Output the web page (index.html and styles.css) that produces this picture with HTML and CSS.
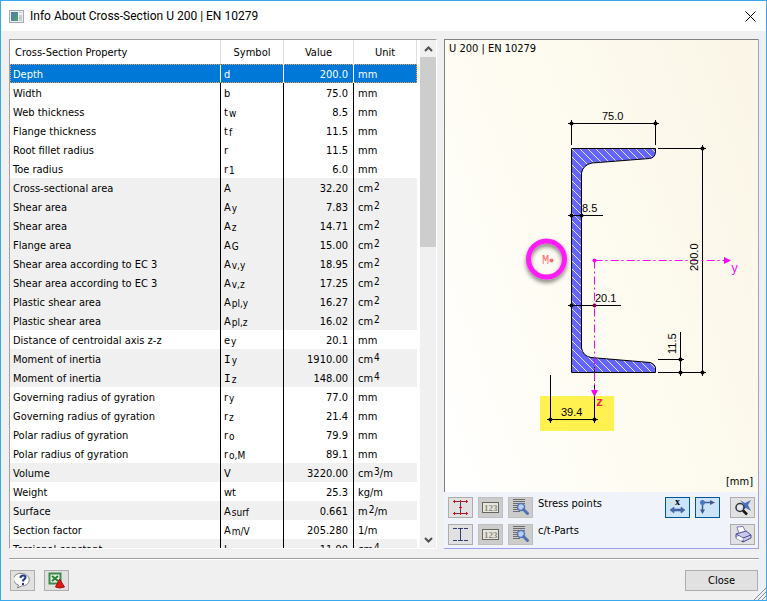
FILE: index.html
```html
<!DOCTYPE html>
<html lang="en">
<head>
<meta charset="utf-8">
<title>Info About Cross-Section U 200 | EN 10279</title>
<link rel="stylesheet" href="styles.css">
</head>
<body>
<div class="window">
  <header class="titlebar">
    <svg class="app-icon" width="15" height="13" viewBox="0 0 15 13" aria-hidden="true">
      <defs><linearGradient id="app" x1="0" y1="0" x2="1" y2="1"><stop offset="0" stop-color="#4a79a8"/><stop offset="1" stop-color="#53a06f"/></linearGradient></defs>
      <rect x=".5" y=".5" width="14" height="12" fill="#eef0f2" stroke="#a4a9ae"/>
      <rect x="2" y="2" width="7" height="9" fill="url(#app)"/>
      <path d="M10 2h3v1h-3zM10 5h3v6h-3z" fill="#c3cad0"/>
    </svg>
    <h1 class="title">Info About Cross-Section U 200 | EN 10279</h1>
    <button class="close-x" type="button" aria-label="Close window">
      <svg width="11" height="11" viewBox="0 0 11 11"><path d="M.5.5l10 10M10.500.5l-10 10" stroke="#000" fill="none"/></svg>
    </button>
  </header>

  <main class="content">
    <section class="list">
      <div class="table-view">
        <table class="props">
          <colgroup><col class="c-name"><col class="c-sym"><col class="c-val"><col class="c-unit"></colgroup>
          <thead><tr><th>Cross-Section Property</th><th>Symbol</th><th>Value</th><th>Unit</th></tr></thead>
          <tbody>
            <tr class="selected"><td>Depth</td><td>d</td><td>200.0</td><td>mm</td></tr>
            <tr><td>Width</td><td>b</td><td>75.0</td><td>mm</td></tr>
            <tr><td>Web thickness</td><td>t<sub>w</sub></td><td>8.5</td><td>mm</td></tr>
            <tr><td>Flange thickness</td><td>t<sub>f</sub></td><td>11.5</td><td>mm</td></tr>
            <tr><td>Root fillet radius</td><td>r</td><td>11.5</td><td>mm</td></tr>
            <tr><td>Toe radius</td><td>r<sub>1</sub></td><td>6.0</td><td>mm</td></tr>
            <tr class="shade"><td>Cross-sectional area</td><td>A</td><td>32.20</td><td>cm<sup>2</sup></td></tr>
            <tr class="shade"><td>Shear area</td><td>A<sub>y</sub></td><td>7.83</td><td>cm<sup>2</sup></td></tr>
            <tr class="shade"><td>Shear area</td><td>A<sub>z</sub></td><td>14.71</td><td>cm<sup>2</sup></td></tr>
            <tr class="shade"><td>Flange area</td><td>A<sub>G</sub></td><td>15.00</td><td>cm<sup>2</sup></td></tr>
            <tr class="shade"><td>Shear area according to EC 3</td><td>A<sub>v,y</sub></td><td>18.95</td><td>cm<sup>2</sup></td></tr>
            <tr class="shade"><td>Shear area according to EC 3</td><td>A<sub>v,z</sub></td><td>17.25</td><td>cm<sup>2</sup></td></tr>
            <tr class="shade"><td>Plastic shear area</td><td>A<sub>pl,y</sub></td><td>16.27</td><td>cm<sup>2</sup></td></tr>
            <tr class="shade"><td>Plastic shear area</td><td>A<sub>pl,z</sub></td><td>16.02</td><td>cm<sup>2</sup></td></tr>
            <tr><td>Distance of centroidal axis z-z</td><td>e<sub>y</sub></td><td>20.1</td><td>mm</td></tr>
            <tr class="shade"><td>Moment of inertia</td><td><span class="serif-i">I</span><sub>y</sub></td><td>1910.00</td><td>cm<sup>4</sup></td></tr>
            <tr class="shade"><td>Moment of inertia</td><td><span class="serif-i">I</span><sub>z</sub></td><td>148.00</td><td>cm<sup>4</sup></td></tr>
            <tr><td>Governing radius of gyration</td><td>r<sub>y</sub></td><td>77.0</td><td>mm</td></tr>
            <tr><td>Governing radius of gyration</td><td>r<sub>z</sub></td><td>21.4</td><td>mm</td></tr>
            <tr><td>Polar radius of gyration</td><td>r<sub>o</sub></td><td>79.9</td><td>mm</td></tr>
            <tr><td>Polar radius of gyration</td><td>r<sub>o,M</sub></td><td>89.1</td><td>mm</td></tr>
            <tr class="shade"><td>Volume</td><td>V</td><td>3220.00</td><td>cm<sup>3</sup>/m</td></tr>
            <tr><td>Weight</td><td>wt</td><td>25.3</td><td>kg/m</td></tr>
            <tr class="shade"><td>Surface</td><td>A<sub>surf</sub></td><td>0.661</td><td>m<sup>2</sup>/m</td></tr>
            <tr><td>Section factor</td><td>A<sub>m/V</sub></td><td>205.280</td><td>1/m</td></tr>
            <tr class="shade"><td>Torsional constant</td><td>J</td><td>11.90</td><td>cm<sup>4</sup></td></tr>
          </tbody>
        </table>
      </div>
      <div class="scrollbar">
        <button type="button" class="arrow" aria-label="Scroll up"><svg width="9" height="6" viewBox="0 0 9 6"><path d="M1 5l3.500-3.500L8 5" fill="none" stroke="#505050" stroke-width="2"/></svg></button>
        <div class="track"><div class="thumb"></div></div>
        <button type="button" class="arrow" aria-label="Scroll down"><svg width="9" height="6" viewBox="0 0 9 6"><path d="M1 1l3.500 3.500L8 1" fill="none" stroke="#505050" stroke-width="2"/></svg></button>
      </div>
    </section>

    <section class="preview">
      <div class="canvas">
        <svg class="drawing" viewBox="445 40 313 452" role="img" aria-label="Channel section U 200">
          <defs>
            <pattern id="hatch" width="8" height="8" x="3" y="4" patternUnits="userSpaceOnUse"><rect width="8" height="8" fill="#6464ff"/><path d="M-1-1l10 10M-1 7l2 2M7-1l2 2" stroke="#e4e4ff" stroke-width="1"/></pattern>
            <filter id="shadow" x="-30%" y="-30%" width="170%" height="170%"><feDropShadow dx="0" dy="3" stdDeviation="2" flood-color="#000" flood-opacity=".5"/></filter>
          </defs>
          <rect x="540" y="396" width="74" height="35" fill="#fff150"/>
          <path d="M571.500 148.500H655.500V152Q655 158 649.500 158.500L592 163Q583 165 581.500 173V348Q583 356 591 357.500L650 362.500Q655 364 655.500 368V372.500H571.500Z" fill="url(#hatch)" stroke="#000"/>
          <g stroke="#000" fill="none">
            <path d="M568 123.500H659M571.500 120V145M655.500 120V145"/>
            <path d="M658 148.500H706M658 372.500H706M702.500 145V376"/>
            <path d="M568 215.500H603M568 305.500H621"/>
            <path d="M680.500 332V376M658 359.500H684"/>
            <path d="M550.500 375V423M594.500 396V423M547 419.500H598"/>
            <path d="M594.500 358V390" stroke-dasharray="5 4"/>
          </g>
          <g stroke="#f0f" fill="none" stroke-dasharray="8 3 2 3">
            <path d="M594.500 260.500H725M594.500 260.500V391"/>
          </g>
          <path d="M724 257l7 3.500-7 3.500zM591 390h7l-3.500 7z" fill="#f0f"/>
          <circle cx="594.500" cy="260.500" r="2" fill="#f0f"/>
          <g fill="#000">
            <circle cx="571.500" cy="123.500" r="2"/><circle cx="655.500" cy="123.500" r="2"/>
            <circle cx="702.500" cy="148.500" r="2"/><circle cx="702.500" cy="372.500" r="2"/>
            <circle cx="571.500" cy="215.500" r="2"/><circle cx="581.500" cy="215.500" r="2"/>
            <circle cx="571.500" cy="305.500" r="2"/><circle cx="594.500" cy="305.500" r="2" fill="#804"/>
            <circle cx="680.500" cy="359.500" r="2"/><circle cx="680.500" cy="372.500" r="2"/>
            <circle cx="550.500" cy="419.500" r="2"/><circle cx="594.500" cy="419.500" r="2"/>
          </g>
          <g class="dim">
            <text x="602" y="120">75.0</text>
            <text x="582" y="212">8.5</text>
            <text x="595" y="302">20.1</text>
            <text x="561" y="416">39.4</text>
            <text transform="translate(698 271) rotate(-90)">200.0</text>
            <text transform="translate(676 354) rotate(-90)">11.5</text>
          </g>
          <circle cx="546.500" cy="259" r="18" fill="none" stroke="#ff1cf7" stroke-width="5" filter="url(#shadow)"/>
          <circle cx="551.500" cy="260.500" r="2" fill="#ff6b6b"/>
          <text class="axis mark" x="542" y="264">M</text>
          <text class="axis" x="731" y="272">y</text>
          <text class="axis zed" x="596" y="406">z</text>
        </svg>
        <div class="caption">U 200 | EN 10279</div>
        <div class="units">[mm]</div>
      </div>

      <div class="toolbar">
        <div class="tools">
          <button type="button" class="tool" aria-labelledby="stress"><svg width="17" height="17" viewBox="0 0 17 17"><path d="M1 2.500h15M1 14.500h15M8.500 3v11" stroke="#3a3f66" fill="none"/><path d="M1 2.500h3M2.500 1v3M1 14.500h3M2.500 13v3M7 2.500h3M8.500 1v3M13 2.500h3M14.500 1v3M7 8.500h3M8.500 7v3M7 14.500h3M8.500 13v3M13 14.500h3M14.500 13v3" stroke="#e00a14"/></svg></button>
          <button type="button" class="tool off" aria-label="Number stress points"><svg width="17" height="11" viewBox="0 0 17 11"><rect x=".5" y=".5" width="16" height="10" fill="#e6e6de" stroke="#66665e"/><text class="digits" x="2" y="9">123</text></svg></button>
          <button type="button" class="tool off" aria-label="Stress point details"><svg width="18" height="17" viewBox="0 0 18 17"><path d="M1 .5h12M1 2.500h12M1 4.500h12M1 6.500h5M1 8.500h4M1 10.500h5M1 12.500h7" stroke="#6c6c6c"/><circle cx="9" cy="8" r="3.500" fill="#b9d0f5" stroke="#5674b8" stroke-width="1.500"/><path d="M11.500 10.500l4 4" stroke="#5270b4" stroke-width="3" stroke-linecap="round"/></svg></button>
          <span class="tool-label" id="stress">Stress points</span>
          <button type="button" class="tool on push" aria-label="Show dimensions"><svg width="17" height="17" viewBox="0 0 17 17"><text class="ex" x="6" y="6">x</text><path d="M1 11l4-3v2h7V8l4 3-4 3v-2H5v2z" fill="#4569ae" stroke="#34528c" stroke-width=".5"/></svg></button>
          <button type="button" class="tool on" aria-label="Show axes"><svg width="17" height="17" viewBox="0 0 17 17"><path d="M3.500 3.500H13M3.500 3.500V13" stroke="#46598b" stroke-width="1.500"/><path d="M11 1l5 2.500L11 6zM1 10.500h5L3.500 15z" fill="#46598b"/><circle cx="3.500" cy="3.500" r="2.500" fill="#4776c4"/></svg></button>
          <button type="button" class="tool gap" aria-label="Zoom to fit"><svg width="18" height="17" viewBox="0 0 18 17"><path d="M6 1l5 3 6-3-3 5 3 6-5-3-5 2 3-5z" fill="#4670c0"/><circle cx="6" cy="8.500" r="4" fill="#e8edf4" fill-opacity=".7" stroke="#333" stroke-width="1.500"/><path d="M9 11.500l4 4" stroke="#111" stroke-width="2.500"/></svg></button>
        </div>
        <div class="tools">
          <button type="button" class="tool" aria-labelledby="parts"><svg width="17" height="17" viewBox="0 0 17 17"><path d="M1 2.500h4M12 2.500h4M1 14.500h4M12 14.500h4M8.500 3v11M6 2.500h5M6 14.500h5" stroke="#343d72" fill="none"/></svg></button>
          <button type="button" class="tool off" aria-label="Number c/t-parts"><svg width="17" height="11" viewBox="0 0 17 11"><rect x=".5" y=".5" width="16" height="10" fill="#e6e6de" stroke="#66665e"/><text class="digits" x="2" y="9">123</text></svg></button>
          <button type="button" class="tool off" aria-label="c/t-part details"><svg width="18" height="17" viewBox="0 0 18 17"><path d="M1 .5h12M1 2.500h12M1 4.500h12M1 6.500h5M1 8.500h4M1 10.500h5M1 12.500h7" stroke="#6c6c6c"/><circle cx="9" cy="8" r="3.500" fill="#b9d0f5" stroke="#5674b8" stroke-width="1.500"/><path d="M11.500 10.500l4 4" stroke="#5270b4" stroke-width="3" stroke-linecap="round"/></svg></button>
          <span class="tool-label" id="parts">c/t-Parts</span>
          <button type="button" class="tool push" aria-label="Print"><svg width="18" height="17" viewBox="0 0 18 17"><path d="M3 1l6-.5 3 5.500-7 2z" fill="#fff" stroke="#7a7ab5"/><path d="M2 8l10-3 5 4v3l-8 4-7-4z" fill="#c9c9f0" stroke="#4b4b8c"/><path d="M2 8l7 4 8-3M9 12v4" fill="none" stroke="#4b4b8c"/><path d="M5 10l5 3-3 2-5-3z" fill="#fff"/></svg></button>
        </div>
      </div>
    </section>
  </main>

  <footer class="footer">
    <button type="button" class="tool" aria-label="Help"><svg width="17" height="17" viewBox="0 0 17 17"><path d="M8.500 1.500a7 6 0 1 1-1 12.500l-4 2 1-3a7 6 0 0 1 4-11.500z" fill="#fafafa" stroke="#858585"/><path d="M6.500 6q0-2.500 2.500-2.500 2.500 0 2.500 2 0 1-1.500 2-1 .5-1 2" stroke="#25398e" stroke-width="2" fill="none"/><path d="M8 11h2v2H8z" fill="#25398e"/></svg></button>
    <button type="button" class="tool" aria-label="Export to Excel"><svg width="18" height="17" viewBox="0 0 18 17"><rect x="1.500" y="1.500" width="11" height="10" fill="#e5f3e3" stroke="#3d8a49" stroke-width="2"/><path d="M4 4l6 5M10 4l-6 5" stroke="#2a7d37" stroke-width="2"/><path d="M11.500 7l5 8q-5 2-9 0z" fill="#e01818" stroke="#a60e0e"/></svg></button>
    <button type="button" class="close">Close</button>
  </footer>
  <svg class="grip" width="12" height="12" viewBox="0 0 12 12" aria-hidden="true"><path d="M0 12L12 0M4 12l8-8M8 12l4-4" stroke="#8c8c8c"/></svg>
</div>
</body>
</html>
```
FILE: styles.css
```css
* { box-sizing: border-box; }

body {
  margin: 0;
  font: 11px/14px "DejaVu Sans Condensed", "Noto Sans", sans-serif;
  color: #000;
}

button { font: inherit; color: inherit; }

.window {
  position: relative;
  display: flex;
  flex-direction: column;
  height: 100vh;
  background: #f0f0f0;
  border: 1px solid #3aa8ec;
}

.titlebar {
  display: flex;
  align-items: center;
  flex: none;
  height: 30px;
  padding: 0 10px 0 8px;
  background: #fff;
}

.title {
  flex: 1;
  margin: 0 0 0 6px;
  font: 12px/16px Roboto, sans-serif;
}

.close-x {
  display: flex;
  padding: 0;
  border: 0;
  background: none;
}

.content {
  display: grid;
  grid-template-columns: minmax(0, 428fr) minmax(0, 315fr);
  gap: 7px;
  flex: 1;
  min-height: 0;
  margin: 8px 7px 0 8px;
}

.list {
  display: flex;
  min-height: 0;
  background: #fff;
  border: 1px solid #a0a0a0;
  border-right-color: #fff;
  border-bottom-color: #fff;
}

.table-view {
  flex: 1;
  min-height: 0;
  overflow: hidden;
}

.props {
  width: 100%;
  table-layout: fixed;
  border-collapse: separate;
  border-spacing: 0;
}

.c-sym { width: 63px; }
.c-val { width: 70px; }
.c-unit { width: 63px; }

.props th {
  height: 24px;
  padding: 1px 0 0;
  font-weight: normal;
  border-right: 1px solid #e0e0e0;
}

.props th:first-child {
  padding-left: 5px;
  text-align: left;
}

.props td {
  height: 19px;
  padding: 2px 3px 0;
  white-space: nowrap;
  border-right: 1px solid #000;
}

.props td:last-child { padding-left: 4px; border-right: 0; }
.props td:nth-child(3) { padding-right: 5px; text-align: right; }

.shade { background: #f0f0f0; }

.selected {
  color: #fff;
  background: #0078d7;
  outline: 1px dotted #e8a15c;
  outline-offset: -1px;
}

.props .selected td { border-right-color: #fff; }

sub, sup {
  margin-left: 1px;
  font-size: 10px;
  line-height: 0;
}

sub { vertical-align: -1px; }
sup { vertical-align: 2px; }

.serif-i { font-family: "DejaVu Sans Mono", monospace; line-height: 0; }

.scrollbar {
  display: flex;
  flex-direction: column;
  flex: none;
  width: 16px;
  margin-left: 3px;
  background: #f0f0f0;
}

.arrow {
  display: flex;
  align-items: center;
  justify-content: center;
  height: 17px;
  padding: 0;
  border: 0;
  background: none;
}

.track { flex: 1; }

.thumb {
  height: 40%;
  background: #cdcdcd;
}

.preview {
  display: flex;
  flex-direction: column;
  min-height: 0;
  border-right: 1px solid #a0a0e8;
  border-bottom: 1px solid #a0a0e8;
}

.canvas {
  position: relative;
  flex: 1;
  min-height: 0;
  border-top: 1px solid #808080;
  border-left: 1px solid #808080;
  background: linear-gradient(70deg, #fff 0%, #fefcf2 40%, #faf5e6 100%);
}

.drawing {
  display: block;
  width: 100%;
  height: 100%;
}

.caption {
  position: absolute;
  top: 2px;
  left: 4px;
}

.units {
  position: absolute;
  right: 5px;
  bottom: 3px;
}

.dim { font: 11px "Liberation Sans", sans-serif; }
.axis { font: 12px "Liberation Mono", monospace; fill: #f0f; }
.mark { fill: #ff7070; }
.zed { font-weight: bold; fill: #f02050; }

.toolbar {
  display: grid;
  gap: 6px;
  padding: 5px 3px 3px 4px;
  background: #f0f4fa;
}

.tools {
  display: flex;
  gap: 5px;
}

.tool {
  display: flex;
  align-items: center;
  justify-content: center;
  flex: none;
  width: 25px;
  height: 21px;
  padding: 0;
  background: #e1e1e1;
  border: 1px solid #adadad;
}

.off { background: #ccc; border-color: #bfbfbf; }
.on { background: #cce4f7; border-color: #005499; }
.push { margin-left: auto; }
.gap { margin-left: 5px; }

.digits { font: bold 9px "Liberation Serif", serif; fill: #8a8a80; }
.ex { font: bold 10px "Liberation Serif", serif; }

.footer {
  display: flex;
  gap: 9px;
  flex: none;
  margin: 9px 7px 0 8px;
  padding: 11px 1px 9px;
  border-top: 1px solid #a0a0a0;
  box-shadow: inset 0 1px #fff;
}

.close {
  width: 73px;
  height: 21px;
  margin-left: auto;
  padding: 0;
  background: #e1e1e1;
  border: 1px solid #adadad;
}

.grip {
  position: absolute;
  right: 0;
  bottom: 0;
}
```
